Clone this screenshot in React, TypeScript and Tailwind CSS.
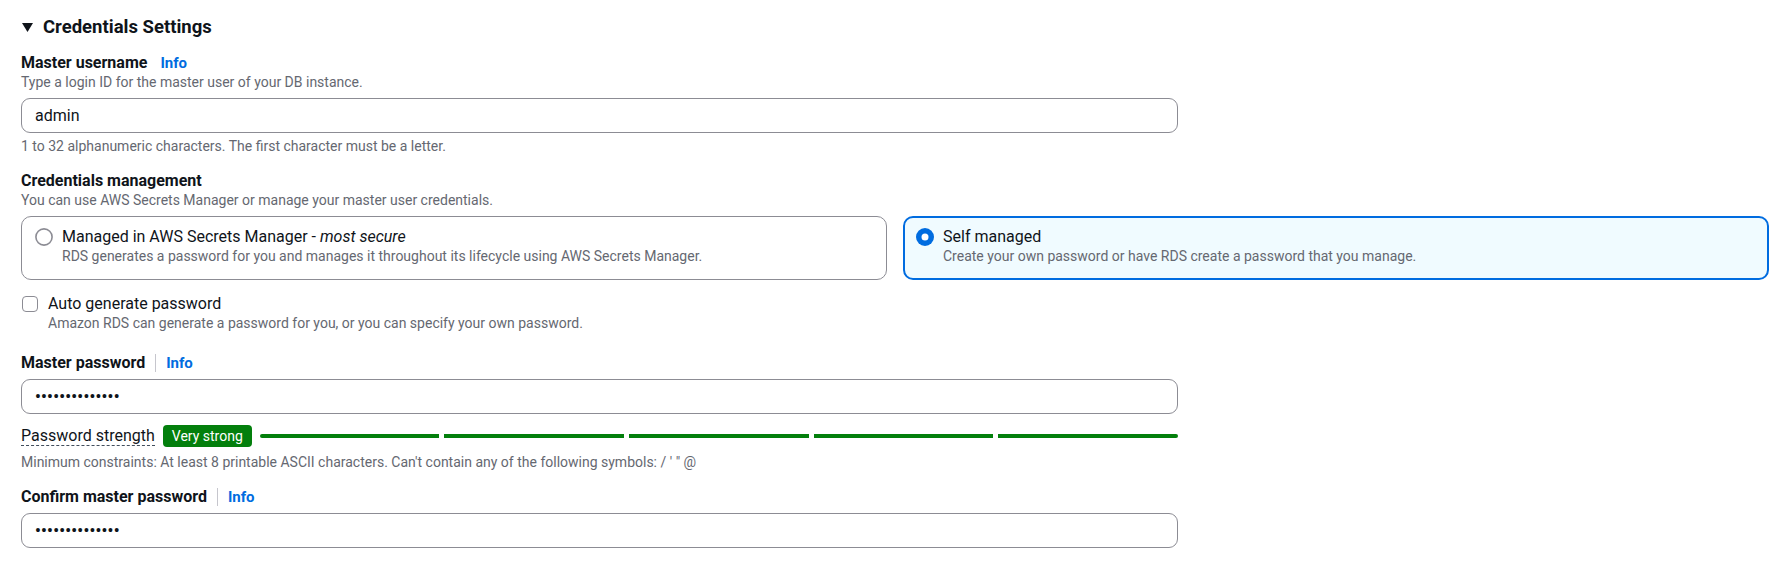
import React from "react";

const font = "font-['Roboto','Liberation_Sans',sans-serif]";

function Info({ sep }: { sep?: boolean }) {
  return (
    <>
      {sep ? (
        <span className="mx-[10px] h-[18px] w-px bg-[#c6c6cd]" />
      ) : (
        <span className="w-[13px]" />
      )}
      <span className="text-[15px] font-bold leading-5 text-[#006ce0]">
        Info
      </span>
    </>
  );
}

function Label({ text, sep }: { text: string; sep?: boolean }) {
  return (
    <div className="flex h-5 items-center">
      <span className="text-[16px] font-bold leading-5 text-[#0f141a]">
        {text}
      </span>
      <Info sep={sep} />
    </div>
  );
}

function Desc({ children }: { children: React.ReactNode }) {
  return (
    <div className="text-[14px] leading-[18px] text-[#656871]">{children}</div>
  );
}

function Field({ value, password }: { value: string; password?: boolean }) {
  return (
    <div className="flex h-[35px] w-[1157px] items-center rounded-[9px] border border-[#8c8c94] bg-white pl-[13px]">
      {password ? (
        <span className="text-[16px] font-bold leading-5 tracking-[0.3px] text-[#0f141a]">
          {"•".repeat(14)}
        </span>
      ) : (
        <span className="text-[16px] leading-5 text-[#0f141a]">{value}</span>
      )}
    </div>
  );
}

function Radio({ checked }: { checked?: boolean }) {
  return (
    <svg width="18" height="18" viewBox="0 0 18 18">
      {checked ? (
        <>
          <circle cx="9" cy="9" r="9" fill="#006ce0" />
          <circle cx="9" cy="9" r="3.5" fill="#ffffff" />
        </>
      ) : (
        <circle
          cx="9"
          cy="9"
          r="8.1"
          fill="#ffffff"
          stroke="#8c8c94"
          strokeWidth="1.6"
        />
      )}
    </svg>
  );
}

export default function App() {
  return (
    <div className={`${font} min-h-[567px] bg-white px-[21px] pt-[15px]`}>
      {/* Header */}
      <div className="flex h-6 items-center">
        <svg width="11" height="9" viewBox="0 0 11 9" className="ml-px">
          <polygon points="0,0 11,0 5.5,9" fill="#0f141a" />
        </svg>
        <span className="ml-[10px] text-[18.5px] font-bold leading-6 text-[#0f141a]">
          Credentials Settings
        </span>
      </div>

      {/* Master username */}
      <div className="mt-[14px]">
        <Label text="Master username" />
        <Desc>Type a login ID for the master user of your DB instance.</Desc>
        <div className="mt-[7px]">
          <Field value="admin" />
        </div>
        <div className="mt-[4px]">
          <Desc>
            1 to 32 alphanumeric characters. The first character must be a
            letter.
          </Desc>
        </div>
      </div>

      {/* Credentials management */}
      <div className="mt-[16px]">
        <div className="text-[16px] font-bold leading-5 text-[#0f141a]">
          Credentials management
        </div>
        <Desc>
          You can use AWS Secrets Manager or manage your master user
          credentials.
        </Desc>
        <div className="mt-[7px] grid grid-cols-2 gap-4">
          <div className="flex h-[64px] gap-[9px] rounded-[10px] border border-[#8c8c94] bg-white pl-[13px] pt-[10px]">
            <div className="flex h-5 items-center">
              <Radio />
            </div>
            <div>
              <div className="text-[16px] leading-5 text-[#0f141a]">
                Managed in AWS Secrets Manager - <i>most secure</i>
              </div>
              <Desc>
                RDS generates a password for you and manages it throughout its
                lifecycle using AWS Secrets Manager.
              </Desc>
            </div>
          </div>
          <div className="flex h-[64px] gap-[9px] rounded-[10px] border-2 border-[#006ce0] bg-[#f0fbff] pl-[11px] pt-[9px]">
            <div className="flex h-5 items-center">
              <Radio checked />
            </div>
            <div>
              <div className="text-[16px] leading-5 text-[#0f141a]">
                Self managed
              </div>
              <Desc>
                Create your own password or have RDS create a password that you
                manage.
              </Desc>
            </div>
          </div>
        </div>
      </div>

      {/* Auto generate */}
      <div className="mt-[14px] flex gap-[10px] pl-px">
        <div className="flex h-5 items-center">
          <span className="h-4 w-4 rounded-[4px] border-[1.5px] border-[#8c8c94] bg-white" />
        </div>
        <div>
          <div className="text-[16px] leading-5 text-[#0f141a]">
            Auto generate password
          </div>
          <Desc>
            Amazon RDS can generate a password for you, or you can specify your
            own password.
          </Desc>
        </div>
      </div>

      {/* Master password */}
      <div className="mt-[21px]">
        <Label text="Master password" sep />
        <div className="mt-[6px]">
          <Field value="" password />
        </div>
        <div className="mt-[11px] flex h-[22px] w-[1157px] items-center">
          <span className="border-b-[1.5px] border-dashed border-[#414d5c] text-[16px] leading-[19px] text-[#0f141a]">
            Password strength
          </span>
          <span className="ml-[8px] flex h-[22px] items-center rounded-[4px] bg-[#037f0c] px-[9px] text-[14px] leading-[18px] text-white">
            Very strong
          </span>
          <div className="ml-[8px] flex flex-1 gap-[5px]">
            <div className="h-[4px] flex-1 rounded-l-full bg-[#037f0c]" />
            <div className="h-[4px] flex-1 bg-[#037f0c]" />
            <div className="h-[4px] flex-1 bg-[#037f0c]" />
            <div className="h-[4px] flex-1 bg-[#037f0c]" />
            <div className="h-[4px] flex-1 rounded-r-full bg-[#037f0c]" />
          </div>
        </div>
        <div className="mt-[6px]">
          <Desc>
            Minimum constraints: At least 8 printable ASCII characters. Can't
            contain any of the following symbols: / ' " @
          </Desc>
        </div>
      </div>

      {/* Confirm */}
      <div className="mt-[16px]">
        <Label text="Confirm master password" sep />
        <div className="mt-[6px]">
          <Field value="" password />
        </div>
      </div>
    </div>
  );
}
